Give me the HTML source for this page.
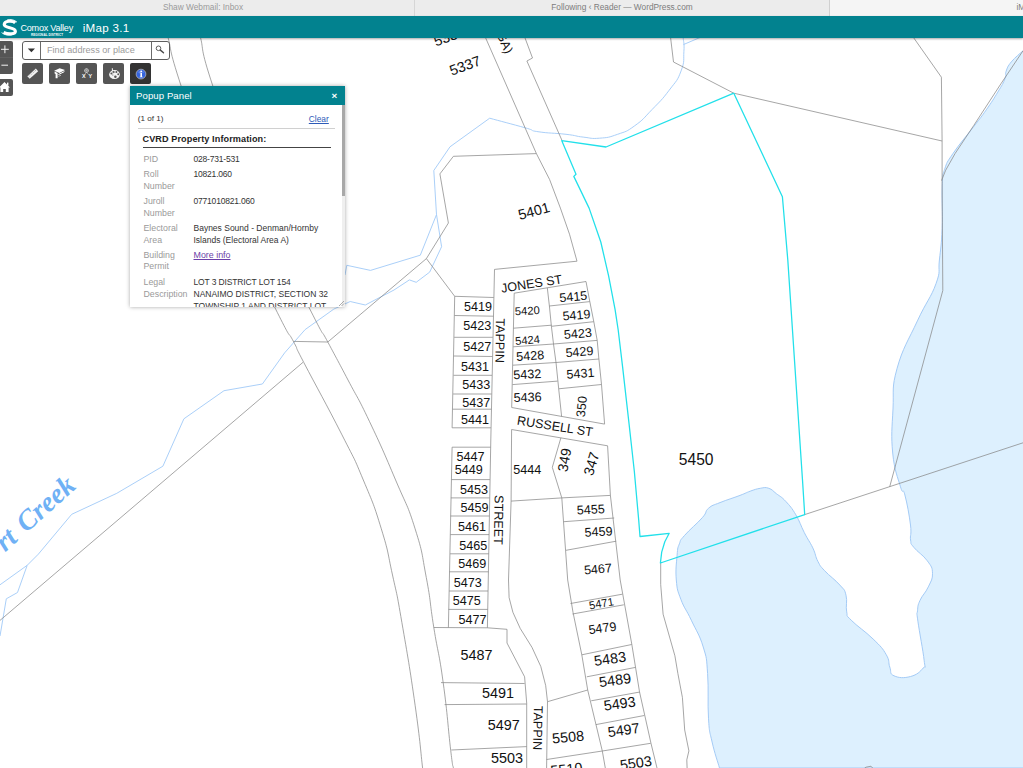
<!DOCTYPE html>
<html><head><meta charset="utf-8"><title>iMap 3.1</title>
<style>
html,body{margin:0;padding:0;}
body{width:1023px;height:768px;overflow:hidden;background:#fff;position:relative;font-family:"Liberation Sans",sans-serif;}
#map{position:absolute;left:0;top:0;width:1023px;height:768px;}
#map text{font-family:"Liberation Sans",sans-serif;fill:#111;text-anchor:middle;dominant-baseline:central;}
#tabs{position:absolute;left:0;top:0;width:1023px;height:16px;background:#ececec;font-size:8.3px;color:#9a9a9a;}
#tabs div{position:absolute;top:0;height:16px;line-height:15px;text-align:center;box-sizing:border-box;white-space:nowrap;overflow:hidden;}
#hdr{position:absolute;left:0;top:16px;width:1023px;height:22px;background:#02828f;box-shadow:0 1px 2px rgba(0,0,0,.35);color:#fff;}
.zb{position:absolute;background:#555;color:#fff;border-radius:2px;}
.tb{position:absolute;top:63px;width:21px;height:21px;background:#555;border-radius:2px;}
#search{position:absolute;left:22px;top:41px;width:148px;height:19px;box-sizing:border-box;border:1px solid #5e5e5e;border-radius:3px;background:#fff;}
#panel{position:absolute;left:130px;top:86px;width:215px;height:221px;background:#fff;box-shadow:0 0 4px rgba(0,0,0,.35);overflow:hidden;font-size:8.1px;color:#333;}
#panel .ph{position:absolute;left:0;top:0;width:215px;height:19px;background:#02828f;color:#fff;font-size:9.6px;line-height:19px;}
#panel .lab{position:absolute;left:13.5px;color:#9a9a9a;white-space:nowrap;line-height:11.7px;font-size:8.8px;}
#panel .val{position:absolute;left:63.5px;color:#333;white-space:nowrap;line-height:11.7px;font-size:8.5px;}
#panel .num{font-size:8.5px;letter-spacing:-0.2px;}
</style></head><body>
<svg id="map" width="1023" height="768" viewBox="0 0 1023 768">
<path d="M1023.0 50.8 C1020.3 53.4 1015.2 57.1 1011.3 61.9 C1007.4 66.7 1007.5 67.4 1006.1 71.3 C1004.7 75.2 1007.0 73.6 1005.1 78.5 C1003.2 83.4 1002.2 84.8 997.8 92.1 C993.4 99.4 991.9 101.8 986.3 109.8 C980.7 117.8 981.6 116.3 973.8 126.5 C966.0 136.7 959.8 143.5 953.0 153.5 C946.2 163.5 947.2 161.7 944.7 169.2 C942.2 176.7 942.8 171.9 942.2 185.8 C941.6 199.7 942.8 211.4 942.1 228.7 C941.4 246.0 940.8 247.2 939.4 260.0 C938.0 272.8 941.1 269.5 936.0 283.7 C930.9 297.9 926.5 301.2 917.4 320.9 C908.3 340.6 902.8 347.7 897.1 368.3 C891.4 388.9 894.0 389.2 893.0 409.0 C892.0 428.8 891.0 434.8 892.7 453.0 C894.5 471.2 897.7 477.0 900.5 486.8 C903.3 496.6 902.6 486.1 904.9 495.0 C907.2 503.9 909.2 514.5 910.5 525.0 C911.8 535.5 909.8 534.8 910.6 540.0 C911.4 545.2 909.9 542.4 913.8 547.3 C917.6 552.2 922.9 554.7 927.3 560.8 C931.7 566.9 932.3 567.2 932.5 573.3 C932.7 579.4 931.2 580.6 928.3 586.9 C925.4 593.2 922.5 594.8 920.0 600.4 C917.5 606.0 918.0 605.9 917.5 610.8 C917.0 615.7 916.3 609.6 917.9 621.2 C919.5 632.9 923.0 649.9 924.2 660.8 C925.4 671.7 926.3 664.4 923.1 668.1 C919.9 671.8 917.4 674.7 910.6 676.5 C903.8 678.3 898.9 678.0 894.0 675.8 C889.1 673.6 891.6 672.0 889.8 667.1 C888.0 662.2 890.1 661.2 886.2 654.6 C882.4 648.0 881.3 647.0 873.1 639.0 C864.9 631.0 857.4 626.5 851.2 620.2 C845.1 613.9 847.9 617.7 846.7 611.9 C845.5 606.1 847.6 601.5 846.0 595.2 C844.4 588.9 844.9 590.8 839.9 585.1 C834.9 579.4 829.7 576.2 824.6 570.7 C819.5 565.2 820.7 566.7 817.9 561.4 C815.1 556.1 816.0 554.6 812.8 547.9 C809.6 541.2 808.2 540.3 804.3 532.6 C800.4 524.9 800.2 522.2 795.9 514.9 C791.6 507.6 790.2 506.2 785.7 501.3 C781.2 496.4 780.3 496.7 776.4 493.7 C772.5 490.7 772.6 489.6 768.8 488.3 C765.0 487.0 764.6 487.6 760.3 488.3 C756.0 489.0 754.9 489.5 750.2 491.2 C745.5 492.9 747.0 492.7 740.0 495.4 C733.0 498.1 727.4 499.6 720.0 502.6 C712.6 505.6 712.6 504.8 708.5 508.3 C704.4 511.8 707.9 511.4 702.3 517.7 C696.7 524.0 689.9 529.3 684.6 535.4 C679.3 541.5 681.1 539.1 679.4 543.8 C677.6 548.4 677.8 546.7 677.1 555.2 C676.4 563.7 675.4 569.7 676.3 580.0 C677.2 590.3 677.4 590.0 680.9 599.4 C684.4 608.8 686.1 609.1 691.3 620.2 C696.5 631.3 699.4 634.4 703.2 646.9 C707.0 659.4 706.4 657.0 707.6 673.6 C708.8 690.2 707.5 702.2 708.5 718.2 C709.5 734.2 709.5 730.4 712.1 742.0 C714.7 753.6 717.8 761.9 719.5 768.0 L1030 768 L1030 50.8 Z" fill="#ddf0fe" stroke="#a4cbf6" stroke-width="1"/>
<g fill="none" stroke="#a0caf7" stroke-width="0.9">
<polyline points="333.8,309.1 305.1,329.6 284.6,352.9 262.4,384.0 224.0,390.7 183.9,418.8 162.9,466.2 116.8,493.3 71.7,514.3 38.4,554.1 27.2,565.3 0.0,584.8"/>
<polyline points="27.2,565.3 17.5,592.5 6.3,598.8 0.0,636.0"/>
<polyline points="489.7,118.2 450.0,146.8 433.8,170.5 436.5,214.6 441.6,246.7 429.7,272.1 416.2,282.3 409.4,279.9 394.0,290.0 365.3,305.0 350.2,301.5 333.8,309.1"/>
<polyline points="436.5,214.6 420.3,255.2 370.5,270.4 346.8,265.3 345.0,275.0"/>
<polyline points="700.0,37.5 683.4,44.6"/>
<path d="M489.7 118.2 C499.2 120.8 512.3 124.2 525.2 127.8 C538.1 131.4 527.1 130.0 538.0 131.7 C548.9 133.4 553.9 132.9 566.0 134.3 C578.1 135.7 574.3 136.1 583.2 137.1 C592.1 138.1 590.2 138.9 599.4 138.2 C608.6 137.5 608.2 137.6 617.6 134.3 C627.0 131.0 625.6 132.3 634.8 125.7 C644.0 119.1 642.8 119.1 652.0 109.6 C661.2 100.1 661.4 100.5 669.2 90.2 C677.0 79.9 677.2 81.2 681.1 70.9 C685.0 60.6 683.3 60.3 683.9 51.5 C684.5 42.7 683.4 41.6 683.2 38.0"/>
</g>
<g fill="none" stroke="#868686" stroke-width="0.74">
<polyline points="303.0,362.3 141.4,500.0 0.0,620.4"/>
<polyline points="293.4,341.4 327.8,342.0 426.4,258.6"/>
<polyline points="453.4,156.3 536.4,153.6"/>
<polyline points="453.4,156.3 439.9,173.9 448.4,223.0 426.4,258.6 454.7,296.3"/>
<polyline points="485.5,37.6 536.4,153.6 549.6,179.5 560.4,208.1 569.5,234.2 577.0,261.2 494.5,269.4 490.8,440.0 487.4,627.8"/>
<polyline points="524.9,37.6 532.5,58.0 526.9,61.0 561.8,140.0"/>
<polyline points="454.7,296.3 493.7,297.5"/>
<polyline points="454.7,296.3 452.1,427.8 490.9,427.8"/>
<polyline points="454.5,315.5 493.3,316.2"/>
<polyline points="454.2,337.3 492.8,337.3"/>
<polyline points="453.8,356.0 492.4,356.5"/>
<polyline points="453.5,375.3 492.0,375.3"/>
<polyline points="453.1,394.0 491.6,394.0"/>
<polyline points="452.6,409.2 491.3,409.2"/>
<polyline points="490.5,447.2 452.1,447.2 448.4,627.5"/>
<polyline points="451.5,479.6 489.9,479.6"/>
<polyline points="450.9,497.9 489.6,497.9"/>
<polyline points="450.6,516.0 489.3,516.0"/>
<polyline points="450.4,534.6 489.0,534.6"/>
<polyline points="450.1,553.8 488.7,553.8"/>
<polyline points="449.5,571.8 488.4,571.8"/>
<polyline points="449.2,591.0 488.0,591.0"/>
<polyline points="448.6,609.4 487.7,609.4"/>
<polyline points="433.7,627.5 487.4,627.8 507.0,629.3 507.0,643.0 524.6,676.8 526.7,703.2 526.7,768.0"/>
<polyline points="441.0,682.6 524.6,683.5"/>
<polyline points="444.6,704.6 526.7,704.0"/>
<polyline points="451.3,750.0 526.7,746.6"/>
<polyline points="514.2,293.2 586.0,281.5 589.8,301.6 593.8,321.7 597.2,340.4 598.9,359.0 601.5,384.5 604.6,424.1 511.7,407.5 514.2,293.2"/>
<polyline points="547.3,287.8 549.4,306.0 551.4,326.3 553.5,344.0 556.0,362.5 558.7,388.8 561.6,416.4"/>
<polyline points="513.5,328.2 551.5,325.2"/>
<polyline points="513.2,346.8 553.5,344.0"/>
<polyline points="512.9,365.2 556.0,362.5"/>
<polyline points="512.5,384.6 557.6,381.1"/>
<polyline points="549.4,306.0 589.8,301.6"/>
<polyline points="551.4,326.3 593.8,321.7"/>
<polyline points="553.5,344.0 597.2,340.4"/>
<polyline points="556.0,362.5 598.9,359.0"/>
<polyline points="558.7,388.8 601.5,384.5"/>
<polyline points="511.6,429.5 607.6,445.8 610.4,495.4 620.2,580.0 631.8,644.3 639.5,691.8 651.0,743.4 657.0,768.0"/>
<polyline points="511.6,429.5 511.1,501.1 508.5,580.0 509.1,597.6 512.9,612.3 520.2,628.4 532.0,647.4 540.8,666.5 545.7,685.6 547.5,701.7 546.6,768.0"/>
<polyline points="511.1,501.1 561.8,497.9 610.4,495.4"/>
<polyline points="560.9,437.8 552.3,467.3 561.8,497.9 567.7,580.0 573.0,612.3 581.8,654.8 587.7,690.0 602.3,751.0 605.3,768.0"/>
<polyline points="563.8,521.7 614.2,518.0"/>
<polyline points="566.0,550.3 616.2,541.2"/>
<polyline points="570.5,603.5 622.4,594.2"/>
<polyline points="572.5,614.0 623.8,604.8"/>
<polyline points="581.8,654.8 631.7,644.5"/>
<polyline points="586.8,676.8 635.5,667.4"/>
<polyline points="591.2,700.8 639.9,692.0"/>
<polyline points="595.9,724.6 644.3,715.5"/>
<polyline points="602.3,751.0 650.7,743.3"/>
<polyline points="547.5,701.7 587.7,690.0"/>
<polyline points="546.6,759.5 602.3,751.0"/>
<polyline points="660.7,562.3 660.7,584.5 663.1,614.2 669.0,635.0 674.9,655.8 677.9,673.6 682.4,697.4 684.7,730.0 688.9,750.9 686.8,759.8 687.1,768.0"/>
<polyline points="670.6,37.8 673.5,62.0 733.8,93.2 942.1,141.0"/>
<polyline points="913.7,37.8 941.4,77.2 942.1,141.0 942.1,180.8 942.8,290.5 889.7,486.8"/>
<polyline points="941.5,180.6 945.7,170.2 955.1,153.5 973.8,125.4 1000.9,83.8 1023.0,50.8"/>
<polyline points="804.7,514.6 1023.0,442.8"/>
<polyline points="864.6,768.0 866.0,767.2 871.0,766.2 872.6,768.0"/>
<path d="M168.2 38.0 C171.7 50.9 167.9 45.7 181.2 86.2 C194.5 126.7 193.0 130.9 218.0 190.0 C243.0 249.1 254.9 267.4 275.0 307.8 C295.1 348.2 285.7 326.8 293.4 341.4 C301.1 356.0 290.8 337.6 303.8 362.5 C316.8 387.4 326.1 403.6 342.0 434.9 C357.9 466.2 352.8 455.0 363.3 480.0 C373.8 505.0 373.5 503.5 381.3 528.8 C389.1 554.1 387.0 550.0 392.5 575.0 C398.0 600.0 395.9 587.9 401.9 622.6 C407.9 657.3 409.6 666.4 415.1 705.2 C420.6 744.0 420.6 751.3 422.6 768.0"/>
<path d="M200.6 38.0 C203.9 50.9 199.5 45.7 212.9 86.2 C226.3 126.7 225.3 130.9 251.0 190.0 C276.7 249.1 288.7 267.3 309.2 307.8 C329.7 348.3 317.5 322.7 327.8 342.0 C338.1 361.3 336.9 358.9 348.0 380.0 C359.1 401.1 356.7 394.6 369.4 421.3 C382.1 448.0 383.4 451.3 395.6 480.0 C407.8 508.7 406.9 502.8 415.1 528.8 C423.3 554.8 421.3 551.3 426.3 577.6 C431.3 603.9 429.3 599.5 433.8 627.5 C438.3 655.5 438.7 650.0 443.2 682.7 C447.7 715.4 448.0 727.6 450.7 750.3 C453.4 773.0 452.7 763.3 453.4 768.0"/>
</g>
<polyline points="733.8,93.2 606.0,147.0 561.7,140.6 576.0,174.3 573.8,176.4 589.1,208.1 600.8,242.0 608.6,275.8 615.1,309.7 618.2,330.0 622.6,366.9 629.1,424.2 634.3,471.0 638.7,520.0 640.0,536.5 669.2,533.3 664.8,541.7 661.7,552.1 660.4,563.0 804.7,514.6 802.5,480.0 787.8,260.0 782.4,196.8 733.8,93.2" fill="none" stroke="#22e0ea" stroke-width="1.28" stroke-linejoin="round"/>
<text transform="translate(70.8,480.5) rotate(-42)" style="font-family:'Liberation Serif',serif;font-style:italic;font-weight:bold;font-size:28px;fill:#6fb1f5;text-anchor:end;word-spacing:3px">rt Creek</text>
<text transform="translate(478,307) rotate(0)" font-size="12.6">5419</text>
<text transform="translate(477.2,326.2) rotate(0)" font-size="12.6">5423</text>
<text transform="translate(477.3,347.2) rotate(0)" font-size="12.6">5427</text>
<text transform="translate(475.1,367.2) rotate(0)" font-size="12.6">5431</text>
<text transform="translate(476.3,385) rotate(0)" font-size="12.6">5433</text>
<text transform="translate(476.3,402.7) rotate(0)" font-size="12.6">5437</text>
<text transform="translate(474.9,419.8) rotate(0)" font-size="12.6">5441</text>
<text transform="translate(499.7,340.6) rotate(91)" font-size="12.6">TAPPIN</text>
<text transform="translate(531.6,284) rotate(-8.8)" font-size="12.6">JONES ST</text>
<text transform="translate(573.3,297) rotate(-5)" font-size="12.6">5415</text>
<text transform="translate(576.5,315.4) rotate(-5)" font-size="12.6">5419</text>
<text transform="translate(577.9,333.9) rotate(-5)" font-size="12.6">5423</text>
<text transform="translate(579.5,352.1) rotate(-5)" font-size="12.6">5429</text>
<text transform="translate(580.5,373.8) rotate(-4)" font-size="12.6">5431</text>
<text transform="translate(581.9,406.6) rotate(-84)" font-size="12.6">350</text>
<text transform="translate(527.3,310.7) rotate(-3)" font-size="11.2">5420</text>
<text transform="translate(527.5,340) rotate(-5)" font-size="11.2">5424</text>
<text transform="translate(530.3,356.1) rotate(-4)" font-size="12.6">5428</text>
<text transform="translate(527.3,374.6) rotate(-3)" font-size="12.6">5432</text>
<text transform="translate(527.6,397.6) rotate(-2)" font-size="12.6">5436</text>
<text transform="translate(555,426.5) rotate(9)" font-size="12.6">RUSSELL ST</text>
<text transform="translate(470.4,456.5) rotate(0)" font-size="12.6">5447</text>
<text transform="translate(468.7,470) rotate(0)" font-size="12.6">5449</text>
<text transform="translate(474,490) rotate(0)" font-size="12.6">5453</text>
<text transform="translate(474.4,508) rotate(0)" font-size="12.6">5459</text>
<text transform="translate(472,527.3) rotate(0)" font-size="12.6">5461</text>
<text transform="translate(473.3,546) rotate(0)" font-size="12.6">5465</text>
<text transform="translate(472.3,564.2) rotate(0)" font-size="12.6">5469</text>
<text transform="translate(467.7,582.5) rotate(0)" font-size="12.6">5473</text>
<text transform="translate(466.8,601.2) rotate(0)" font-size="12.6">5475</text>
<text transform="translate(472.6,620.3) rotate(0)" font-size="12.6">5477</text>
<text transform="translate(498.3,520) rotate(91)" font-size="12.6">STREET</text>
<text transform="translate(527.2,470.3) rotate(0)" font-size="12.6">5444</text>
<text transform="translate(564.3,460) rotate(-80)" font-size="14.2">349</text>
<text transform="translate(591.4,463.7) rotate(-73)" font-size="14.2">347</text>
<text transform="translate(590.8,509.8) rotate(-3)" font-size="12.6">5455</text>
<text transform="translate(598.5,532) rotate(-3)" font-size="12.6">5459</text>
<text transform="translate(598,569.3) rotate(-5)" font-size="12.6">5467</text>
<text transform="translate(601.4,603.3) rotate(-10)" font-size="11.2">5471</text>
<text transform="translate(602.5,628.4) rotate(-8)" font-size="12.6">5479</text>
<text transform="translate(610,658.7) rotate(-8)" font-size="14.4">5483</text>
<text transform="translate(615,680.1) rotate(-8)" font-size="14.4">5489</text>
<text transform="translate(619.6,703.6) rotate(-8)" font-size="14.4">5493</text>
<text transform="translate(623.6,730) rotate(-8)" font-size="14.4">5497</text>
<text transform="translate(635.8,763) rotate(-8)" font-size="14.4">5503</text>
<text transform="translate(476.5,654.8) rotate(0)" font-size="14.4">5487</text>
<text transform="translate(498,692.6) rotate(0)" font-size="14.4">5491</text>
<text transform="translate(503.8,725.2) rotate(0)" font-size="14.4">5497</text>
<text transform="translate(507,758.3) rotate(0)" font-size="14.4">5503</text>
<text transform="translate(537.5,728) rotate(91)" font-size="12.6">TAPPIN</text>
<text transform="translate(568,737) rotate(-5)" font-size="14.4">5508</text>
<text transform="translate(566.5,769.2) rotate(-6)" font-size="14.4">5510</text>
<text transform="translate(534,211) rotate(-15)" font-size="14.4">5401</text>
<text transform="translate(696.2,459) rotate(0)" font-size="15.6">5450</text>
<text transform="translate(465,65.6) rotate(-20)" font-size="14.4">5337</text>
<text transform="translate(449.4,36.4) rotate(-20)" font-size="14.4">5335</text>
<text transform="translate(503.7,40.8) rotate(66)" font-size="12.6">(GA)</text>




</svg>
<div id="tabs">
<div style="left:0;width:415px;border-right:1px solid #d6d6d6;padding-right:8px;">Shaw Webmail: Inbox</div>
<div style="left:415px;width:415px;border-right:1px solid #d0d0d0;color:#7c7c7c;padding-left:0px;">Following ‹ Reader — WordPress.com</div>
<div style="left:830px;width:193px;background:#f5f5f5;color:#7c7c7c;text-align:left;padding-left:186.5px;">iMap 3.1</div>
</div>
<div id="hdr">
<svg style="position:absolute;left:0;top:0" width="20" height="22" viewBox="0 0 20 22"><path d="M15.2 6.9 C12.6 4.4 4.3 4.6 4.2 8.6 C4.2 12.2 15.4 11.4 15.4 15.2 C15.4 18.4 8 18.4 3.6 16.4" fill="none" stroke="#fff" stroke-width="3.1"/><path d="M7 4.0 C10.5 2.8 14.6 3.9 17 6.2" fill="none" stroke="#fff" stroke-width="0.9"/><path d="M1.6 16.6 C4.4 19.2 9.4 19.9 12.4 18.8" fill="none" stroke="#fff" stroke-width="0.9"/></svg>
<div style="position:absolute;left:20.5px;top:7.2px;font-size:9.1px;line-height:11px;letter-spacing:-0.25px;white-space:nowrap;">Comox Valley</div>
<div style="position:absolute;left:30.9px;top:16.9px;font-size:3px;line-height:4px;font-weight:bold;letter-spacing:0.11px;white-space:nowrap;">REGIONAL DISTRICT</div>
<div style="position:absolute;left:82.7px;top:4.5px;font-size:11.6px;line-height:14px;letter-spacing:0.28px;white-space:nowrap;">iMap 3.1</div>
</div>
<div class="zb" style="left:-4px;top:41px;width:17px;height:33px;"></div>
<div style="position:absolute;left:-4px;top:57px;width:17px;height:1px;background:#606060;"></div>
<svg style="position:absolute;left:0;top:42px" width="14" height="56" viewBox="0 0 14 56"><path d="M1 7.3H8.8M4.9 3.4V11.2M1.4 23.2H8" stroke="#f4f4f4" stroke-width="1" fill="none"/></svg>
<div class="zb" style="left:-4px;top:79px;width:17px;height:17px;"></div>
<svg style="position:absolute;left:0;top:79px" width="13" height="17" viewBox="0 0 13 17"><path d="M-1 8.5 L4.5 3 L10 8.5 L8.6 8.5 L8.6 13 L5.8 13 L5.8 10 L3.2 10 L3.2 13 L0.4 13 L0.4 8.5 Z" fill="#fff"/><rect x="7" y="3.6" width="1.4" height="3" fill="#fff"/></svg>
<div id="search">
 <div style="position:absolute;left:17px;top:0;width:1px;height:17px;background:#6b6b6b;"></div>
 <div style="position:absolute;left:128px;top:0;width:1px;height:17px;background:#6b6b6b;"></div>
 <svg style="position:absolute;left:0;top:0" width="17" height="17" viewBox="0 0 17 17"><path d="M4.8 6.4 L12 6.4 L8.4 10.3 Z" fill="#333"/></svg>
 <div style="position:absolute;left:24px;top:0;line-height:17px;font-size:9.15px;color:#9b9b9b;white-space:nowrap;">Find address or place</div>
 <svg style="position:absolute;left:130px;top:0" width="17" height="17" viewBox="0 0 17 17"><circle cx="5.5" cy="6.3" r="2.3" fill="none" stroke="#4a4a4a" stroke-width="0.9"/><path d="M7.4 8.1 L10.5 10.8" stroke="#4a4a4a" stroke-width="1.4" stroke-linecap="round"/></svg>
</div>
<div class="tb" style="left:22px;"><svg width="21" height="21" viewBox="0 0 21 21"><g transform="translate(10.75,10.7) rotate(-42)"><rect x="-5.7" y="-1.75" width="11.4" height="3.5" fill="#f2f2f2"/><path d="M-4.2 -1.75v1.6M-2.8 -1.75v1.1M-1.4 -1.75v1.6M0 -1.75v1.1M1.4 -1.75v1.6M2.8 -1.75v1.1M4.2 -1.75v1.6" stroke="#666" stroke-width="0.5"/></g></svg></div>
<div class="tb" style="left:49px;"><svg width="21" height="21" viewBox="0 0 21 21"><path d="M5.2 7.8 L10.6 5.3 L16 6.9 L10.4 9.9 Z" fill="#fff"/><path d="M5.6 8.6 L8.6 10 L8.6 15.2 L6.6 15.2 L6.6 11 L5.6 10.6 Z" fill="#fff"/><path d="M9.4 11.6 L15.4 8.6" stroke="#fff" stroke-width="1" fill="none"/><path d="M9.4 13.4 L12 12.2" stroke="#ddd" stroke-width="0.7" fill="none"/></svg></div>
<div class="tb" style="left:76px;"><svg width="21" height="21" viewBox="0 0 21 21"><circle cx="10.5" cy="7.6" r="1.9" fill="none" stroke="#eee" stroke-width="0.7"/><path d="M8.6 7.6h3.8M10.5 5.7v3.8" stroke="#ddd" stroke-width="0.45"/><path d="M10.5 9.5L8.8 11.3M10.5 9.5L12.6 11.3" stroke="#ddd" stroke-width="0.5"/><text x="7.7" y="15.2" font-size="5.4" font-weight="bold" fill="#fff" text-anchor="middle" font-family="Liberation Sans, sans-serif">X</text><text x="14.4" y="15.2" font-size="5.4" font-weight="bold" fill="#fff" text-anchor="middle" font-family="Liberation Sans, sans-serif">Y</text></svg></div>
<div class="tb" style="left:103px;"><svg width="21" height="21" viewBox="0 0 21 21"><ellipse cx="11.5" cy="11.6" rx="5.4" ry="4.5" fill="#f4f4f4"/><circle cx="8.4" cy="10.6" r="1" fill="#555"/><circle cx="10.7" cy="9" r="1" fill="#555"/><circle cx="13.4" cy="9.1" r="1" fill="#555"/><circle cx="15.2" cy="11.2" r="0.95" fill="#555"/><circle cx="12.4" cy="13.7" r="1.25" fill="#555"/><path d="M9.3 5.2 L10 15.6" stroke="#f4f4f4" stroke-width="1"/><path d="M9.55 8 L9.85 13" stroke="#555" stroke-width="0.45"/></svg></div>
<div class="tb" style="left:130px;background:#333;"><svg width="21" height="21" viewBox="0 0 21 21"><circle cx="11" cy="11.1" r="4.9" fill="#3463dc" stroke="#d9d2c4" stroke-width="0.6"/><path d="M7.4 10 A4 4 0 0 1 14.6 10 A6 3 0 0 0 7.4 10Z" fill="#6d91ee" opacity="0.7"/><rect x="10.4" y="9.8" width="1.6" height="4.2" fill="#fff"/><rect x="10.4" y="7.6" width="1.6" height="1.5" fill="#fff"/><path d="M9.6 9.8h1M9.6 14h3.2" stroke="#fff" stroke-width="0.6"/></svg></div>
<div id="panel">
<div class="ph"><span style="position:absolute;left:6px;letter-spacing:0.08px;">Popup Panel</span><span style="position:absolute;left:201.5px;top:0;font-size:9.8px;font-weight:bold;">×</span></div>
<div style="position:absolute;left:7.8px;top:27px;line-height:12px;font-size:8.1px;">(1 of 1)</div>
<div style="position:absolute;left:178.8px;top:27px;line-height:12px;font-size:8.4px;color:#2d5bb8;text-decoration:underline;">Clear</div>
<div style="position:absolute;left:8px;top:42px;width:197px;height:1px;background:#d0d0d0;"></div>
<div style="position:absolute;left:12.5px;top:46.8px;line-height:12px;font-size:9.1px;font-weight:bold;color:#222;letter-spacing:0.1px;white-space:nowrap;">CVRD Property Information:</div>
<div style="position:absolute;left:12.5px;top:61.3px;width:188.5px;height:1px;background:#444;"></div>
<div class="lab" style="top:67.95px">PID</div>
<div class="lab" style="top:83.35px">Roll</div>
<div class="lab" style="top:95.05px">Number</div>
<div class="lab" style="top:110.15px">Juroll</div>
<div class="lab" style="top:121.85px">Number</div>
<div class="lab" style="top:137.05px">Electoral</div>
<div class="lab" style="top:148.75px">Area</div>
<div class="lab" style="top:163.75px">Building</div>
<div class="lab" style="top:175.45px">Permit</div>
<div class="lab" style="top:191.15px">Legal</div>
<div class="lab" style="top:202.85px">Description</div>
<div class="val num" style="top:67.95px">028-731-531</div>
<div class="val num" style="top:83.35px">10821.060</div>
<div class="val num" style="top:110.15px">0771010821.060</div>
<div class="val" style="top:137.05px">Baynes Sound - Denman/Hornby</div>
<div class="val" style="top:148.75px">Islands (Electoral Area A)</div>
<div class="val" style="top:191.15px"><span style="letter-spacing:-0.14px">LOT 3 DISTRICT LOT 154</span></div>
<div class="val" style="top:202.85px">NANAIMO DISTRICT, SECTION 32</div>
<div class="val" style="top:214.55px">TOWNSHIP 1 AND DISTRICT LOT</div>
<div class="val" style="top:163.75px;font-size:8.9px;color:#6b3fa8;text-decoration:underline;">More info</div>
<div style="position:absolute;left:211.5px;top:19px;width:3.5px;height:202px;background:#efefef;"></div>
<div style="position:absolute;left:211.8px;top:19px;width:3.2px;height:91px;background:#a8a8a8;"></div>
<svg style="position:absolute;left:207px;top:213px" width="8" height="8" viewBox="0 0 8 8"><path d="M7 2L2 7M7 4.5L4.5 7" stroke="#888" stroke-width="0.7"/></svg>
</div>
</body></html>
